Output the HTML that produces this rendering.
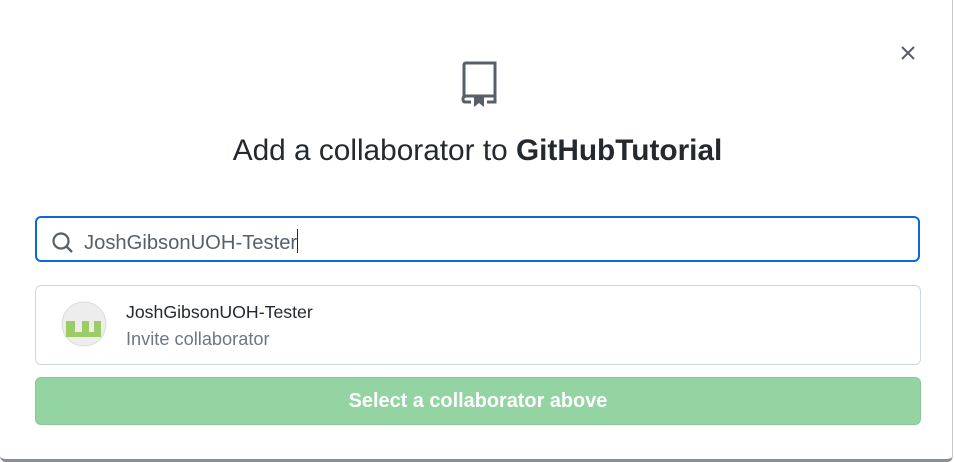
<!DOCTYPE html>
<html><head><meta charset="utf-8"><style>
html,body{margin:0;padding:0;width:955px;height:462px;background:#fff;overflow:hidden;font-family:"Liberation Sans",sans-serif}
.frame{position:absolute;left:0;top:0;width:952px;height:459px;border-right:1px solid #c8c8c8;border-bottom:3px solid #8a8d91;border-radius:0 0 6px 6px}
.title{position:absolute;left:0;width:955px;top:134px;text-align:center;font-size:29.8px;color:#24292f}
.input{position:absolute;left:35px;top:216px;width:881px;height:42px;border:2px solid #0969da;border-radius:6px}
.txt{position:absolute;left:84px;top:229px;font-size:20.2px;color:#57606a}
.card{position:absolute;left:35px;top:285px;width:884px;height:78px;border:1px solid #d0d7de;border-radius:6px}
.btn{position:absolute;left:35px;top:377px;width:884px;height:46px;border:1px solid #83c79a;border-radius:6px;background:#94d3a2;color:#fff;font-weight:bold;font-size:19.9px;text-align:center;line-height:46px}
</style></head><body>
<div class="frame"></div>
<svg style="position:absolute;left:899px;top:44px" width="18" height="18" viewBox="0 0 18 18"><path d="M3 3L15 15M15 3L3 15" stroke="#57606a" stroke-width="2"/></svg>
<svg style="position:absolute;left:458px;top:60px" width="40" height="48" viewBox="0 0 40 48"><path d="M6 38V5Q6 3 8 3H37V42H29M13 42H7Q5 42 5 39Q5 36 8 36H37" fill="none" stroke="#57606a" stroke-width="3"/><path d="M16 36H26V47L21 43L16 47Z" fill="#57606a"/></svg>
<div class="title">Add a collaborator to <b>GitHubTutorial</b></div>
<div class="input"></div>
<svg style="position:absolute;left:51px;top:231px" width="24" height="24" viewBox="0 0 24 24"><circle cx="10" cy="10" r="7.5" fill="none" stroke="#57606a" stroke-width="2.2"/><path d="M15.5 15.5L21 21" stroke="#57606a" stroke-width="2.4"/></svg>
<div class="txt">JoshGibsonUOH-Tester<span style="display:inline-block;width:1px;height:24px;background:#24292f;vertical-align:-4px"></span></div>
<div class="card"></div>
<svg style="position:absolute;left:61px;top:301px" width="46" height="46" viewBox="0 0 46 46"><circle cx="23" cy="23" r="22" fill="#ededed" stroke="#ddd"/><path d="M5 20H14V31H21V20H28V31H33V20H40V36H5Z" fill="#9ccc65"/></svg>
<div style="position:absolute;left:126px;top:302px;font-size:17.7px;color:#24292f">JoshGibsonUOH-Tester</div>
<div style="position:absolute;left:126px;top:329px;font-size:18.2px;color:#6e7781">Invite collaborator</div>
<div class="btn">Select a collaborator above</div>
</body></html>
